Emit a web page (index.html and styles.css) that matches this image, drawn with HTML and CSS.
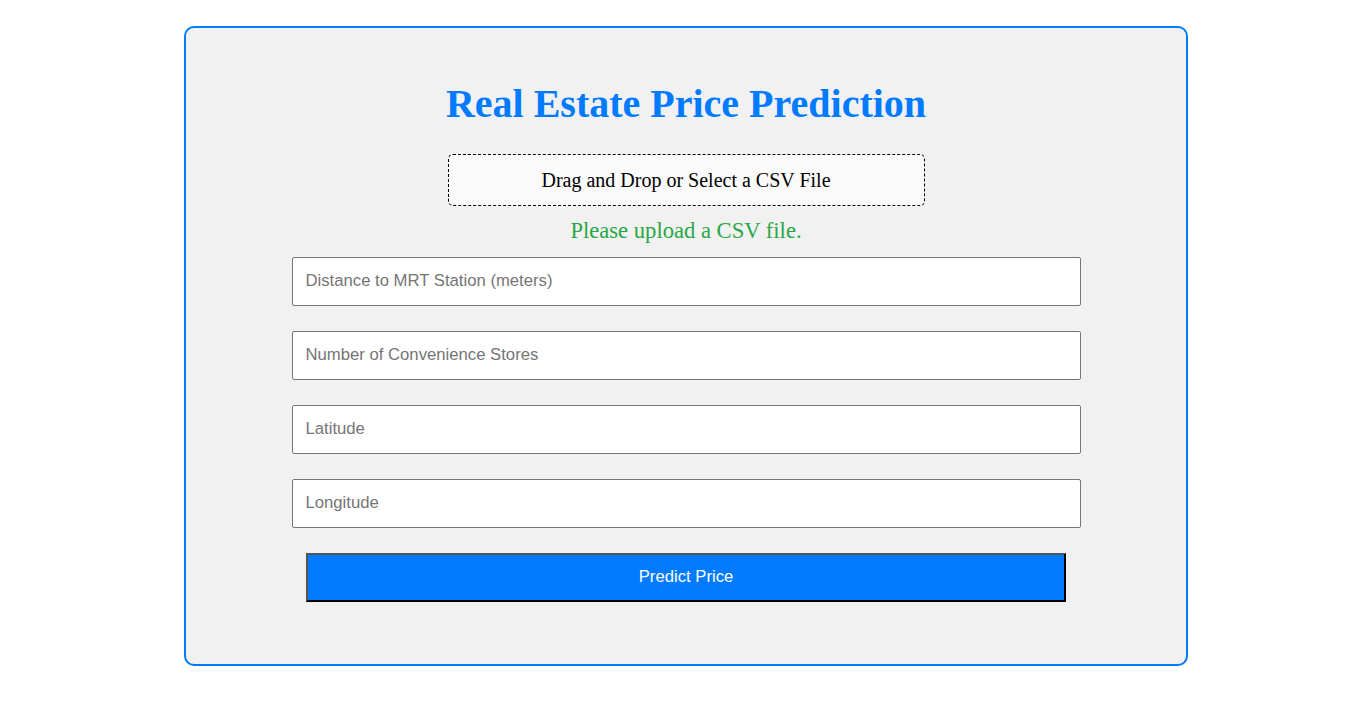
FILE: index.html
```html
<!DOCTYPE html>
<html>
<head>
<meta charset="utf-8">
<link rel="stylesheet" href="styles.css">
</head>
<body>
<div class="card">
  <h1 class="title">Real Estate Price Prediction</h1>
  <div class="drop">Drag and Drop or Select a CSV File</div>
  <p class="status">Please upload a CSV file.</p>
  <form class="form">
    <input class="field" type="text" placeholder="Distance to MRT Station (meters)">
    <input class="field" type="text" placeholder="Number of Convenience Stores">
    <input class="field" type="text" placeholder="Latitude">
    <input class="field" type="text" placeholder="Longitude">
    <button class="btn" type="button">Predict Price</button>
  </form>
</div>
</body>
</html>
```
FILE: styles.css
```css
html, body {
  margin: 0;
  padding: 0;
  background: #ffffff;
}
body {
  padding: 26px 0 0 184px;
  font-family: "Liberation Serif", "Times New Roman", serif;
}
.card {
  box-sizing: border-box;
  width: 1004px;
  height: 640px;
  border: 2px solid #007bff;
  border-radius: 10px;
  background: #f1f1f1;
  padding-top: 54px;
  display: flex;
  flex-direction: column;
  align-items: center;
}
.title {
  margin: 0;
  font-size: 40px;
  font-weight: bold;
  color: #007bff;
  line-height: 44px;
}
.drop {
  box-sizing: border-box;
  margin-top: 28px;
  width: 477px;
  height: 52px;
  border: 1px dashed #000;
  border-radius: 5px;
  background: #fafafa;
  display: flex;
  align-items: center;
  justify-content: center;
  font-size: 20px;
  color: #000;
}
.status {
  margin: 12px 0 0;
  font-size: 22.6px;
  line-height: 26px;
  color: #28a745;
}
.form {
  margin-top: 13px;
  width: 789px;
  display: flex;
  flex-direction: column;
  align-items: center;
  gap: 25px;
}
.field {
  box-sizing: border-box;
  width: 789px;
  height: 49px;
  margin: 0;
  padding: 0 13px 2px;
  border: 1px solid #767676;
  border-radius: 2px;
  background: #fff;
  font-family: "Liberation Sans", Arial, sans-serif;
  font-size: 16.7px;
  color: #000;
  outline: none;
}
.field::placeholder {
  color: #757575;
}
.btn {
  box-sizing: border-box;
  width: 760px;
  height: 49px;
  margin: 0;
  padding: 0 0 2px;
  background: #007bff;
  border: 2px solid;
  border-color: #555 #000 #000 #555;
  color: #fff;
  font-family: "Liberation Sans", Arial, sans-serif;
  font-size: 16.7px;
  cursor: pointer;
}
```
